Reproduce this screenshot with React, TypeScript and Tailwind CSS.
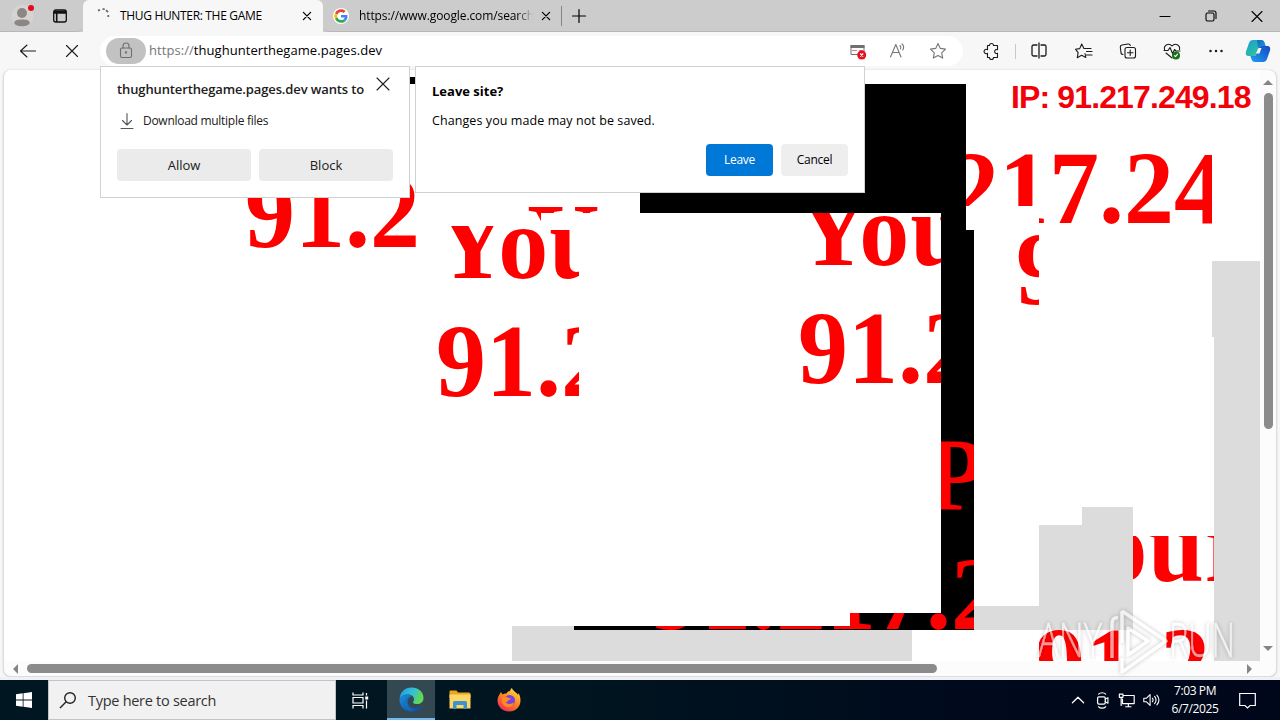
import type { ReactNode } from "react";

function Shard({ box, text, at }: { box: string; text?: string; at?: string }) {
  return (
    <div className={`absolute overflow-hidden ${box}`}>
      {text && (
        <span
          className={`absolute mt-[5px] scale-y-[1.03] whitespace-pre font-bold text-[100px] leading-[100px] text-[#ff0000] [font-family:'Liberation_Serif',serif] ${at}`}
        >
          {text}
        </span>
      )}
    </div>
  );
}

function Icon({ children, className = "", size = 20 }: { children: ReactNode; className?: string; size?: number }) {
  return (
    <svg
      viewBox="0 0 20 20"
      width={size}
      height={size}
      fill="none"
      stroke="currentColor"
      strokeWidth="1.1"
      strokeLinecap="round"
      strokeLinejoin="round"
      className={`shrink-0 ${className}`}
    >
      {children}
    </svg>
  );
}

function TabBar() {
  return (
    <div className="flex h-8 shrink-0 bg-[#cccccc] text-[12px] text-black">
      <div className="flex w-[83px] items-center rounded-br-md border-b border-[#b8b8b8]">
        <svg width="24" height="24" viewBox="0 0 24 24" className="ml-[11px] shrink-0">
          <circle cx="11.5" cy="12" r="11" fill="#d6d3d1" />
          <circle cx="11" cy="9" r="5" fill="#8c8785" />
          <path d="M3.3 19c0-3 3-3.600 7.700-3.600s7.700.6 7.700 3.600c0 1.500-3.600 3.300-7.700 3.300S3.300 20.500 3.300 19z" fill="#8c8785" />
          <circle cx="20" cy="4" r="3" fill="#e00b1c" />
        </svg>
        <svg width="16" height="16" viewBox="0 0 16 16" className="ml-[17px] shrink-0" fill="none" stroke="#111" strokeWidth="1.300">
          <rect x="1.700" y="2" width="12.600" height="12" rx="2" />
          <path d="M2 3.500h12M2 5h12M4.700 5v9" strokeWidth="1.600" />
        </svg>
      </div>
      <div className="flex w-[240px] items-center rounded-t-md bg-[#f7f7f7]">
        <svg width="16" height="16" viewBox="0 0 16 16" className="ml-[13px] shrink-0" fill="none" stroke="#6b6b6b" strokeWidth="1.800">
          <path d="M2 2.600l2-.8M6.500 1.200h2.200M10 2.200l2 2M12.300 7v2" />
        </svg>
        <span className="ml-2 w-[174px] whitespace-nowrap tracking-[-0.33px] [font-family:'Open_Sans',sans-serif]">THUG HUNTER: THE GAME</span>
        <Icon size={16} className="ml-[5px]"><path d="M5.500 5.500l9 9M14.500 5.500l-9 9" strokeWidth="1.600" /></Icon>
      </div>
      <div className="flex w-[239px] items-center rounded-bl-md border-b border-[#b8b8b8]">
        <svg width="16" height="16" viewBox="0 0 48 48" className="ml-[10px] shrink-0">
          <circle cx="24" cy="24" r="24" fill="#fff" />
          <g transform="translate(4 4) scale(.84)">
            <path fill="#ea4335" d="M24 9.500c3.500 0 6.700 1.200 9.200 3.600l6.900-6.900C35.900 2.400 30.500 0 24 0 14.600 0 6.500 5.400 2.600 13.200l8 6.200C12.400 13.700 17.700 9.500 24 9.500z" />
            <path fill="#4285f4" d="M47 24.600c0-1.600-.2-3.100-.4-4.600H24v9h12.900c-.6 3-2.200 5.500-4.700 7.200l7.700 6C44.400 38 47 32 47 24.600z" />
            <path fill="#fbbc05" d="M10.500 28.600c-.5-1.500-.8-3-.8-4.600s.3-3.100.8-4.600l-8-6.200C.9 16.500 0 20.100 0 24s.9 7.500 2.600 10.800z" />
            <path fill="#34a853" d="M24 48c6.500 0 11.900-2.100 15.900-5.800l-7.700-6c-2.200 1.500-4.900 2.300-8.200 2.300-6.300 0-11.600-4.200-13.500-9.900l-8 6.200C6.500 42.600 14.600 48 24 48z" />
          </g>
        </svg>
        <span className="ml-[10px] w-[174px] overflow-hidden whitespace-nowrap tracking-[-0.1px] [font-family:'Open_Sans',sans-serif] [mask-image:linear-gradient(to_right,#000_158px,transparent_174px)]">https://www.google.com/search</span>
        <Icon size={16} className="ml-[5px]"><path d="M5.500 5.500l9 9M14.500 5.500l-9 9" strokeWidth="1.600" /></Icon>
        <div className="ml-auto h-5 w-px bg-[#858585]" />
      </div>
      <div className="flex flex-1 items-center border-b border-[#b8b8b8]">
        <Icon size={20} className="ml-[7px]"><path d="M10 3.500v13M3.500 10h13" strokeWidth="1.200" /></Icon>
        <div className="ml-auto flex items-center gap-[26px] pr-[13px]">
          <Icon><path d="M5 10.500h10" /></Icon>
          <Icon><rect x="5" y="7" width="8" height="8" rx="1.500" /><path d="M7.500 5h5.500a2 2 0 0 1 2 2v5.500" /></Icon>
          <Icon><path d="M5 5.500l10 10M15 5.500l-10 10" /></Icon>
        </div>
      </div>
    </div>
  );
}

function Toolbar() {
  return (
    <div className="flex h-[38px] shrink-0 items-center text-[#1b1b1b]">
      <Icon className="ml-[18px]"><path d="M2.500 10h15M9 4L2.500 10 9 16" /></Icon>
      <Icon className="ml-6"><path d="M4.500 4.500l11 11M15.500 4.500l-11 11" /></Icon>
      <div className="ml-[18px] flex h-[30px] w-[863px] items-center rounded-full bg-white text-[#767676]">
        <div className="ml-[6px] flex h-[26px] w-10 items-center justify-center rounded-full bg-[#c2c2c2]">
          <Icon size={20} className="text-[#6e6e6e]"><rect x="4.500" y="7" width="11" height="9.500" rx="1.500" /><path d="M7 7V5a3 3 0 0 1 6 0v2" /><circle cx="10" cy="11.500" r=".6" fill="currentColor" /></Icon>
        </div>
        <span className="ml-[3px] text-[13px] tracking-[0.06px] [font-family:'Open_Sans',sans-serif]">
          https://<span className="text-black">thughunterthegame.pages.dev</span>
        </span>
        <div className="ml-auto flex items-center gap-5 pr-[15px]">
          <svg width="20" height="20" viewBox="0 0 20 20">
            <path d="M3 4.500h13v9H3z" fill="none" stroke="#707070" />
            <path d="M2.500 4h14v3h-14z" fill="#707070" />
            <path d="M4 9.500h5M11 9.500h4" stroke="#d08080" />
            <circle cx="13.700" cy="14" r="4.500" fill="#e8101c" />
            <path d="M12.200 12.500l3 3M15.200 12.500l-3 3" stroke="#fff" strokeWidth="1.200" />
          </svg>
          <Icon><path d="M2.500 16L7.800 3.500 13 16M4.500 11.500h6.500M12 4.500c1 1 1 2.500.4 3.500M14 2.800c2 2 1.800 4.500.7 6.200" /></Icon>
          <Icon><path d="M10 2.500l2.300 4.900 5.200.7-3.800 3.700 1 5.300L10 14.500l-4.700 2.600 1-5.300L2.500 8.100l5.200-.7z" /></Icon>
        </div>
      </div>
      <div className="ml-[18px] flex items-center">
        <Icon><path d="M6.500 4.500h2a2 2 0 0 1 4 0h4v4.200a2 2 0 1 0 0 3.600v4.200h-4a2 2 0 0 1-4 0h-2v-4.200a2.200 2.200 0 1 1 0-3.600z" /></Icon>
        <div className="ml-[14px] h-[15px] w-px bg-[#c8c8c8]" />
        <Icon className="ml-[13px]"><path d="M8 4H4.500A1.500 1.500 0 0 0 3 5.500v8A1.500 1.500 0 0 0 4.500 15H8M12 4h3.500A1.500 1.500 0 0 1 17 5.500v8a1.500 1.500 0 0 1-1.500 1.500H12M10 2v15" strokeWidth="1.300" /></Icon>
        <Icon className="ml-[25px]"><path d="M11 12.500l.8 4-4.200-2.200-4.300 2.400.8-5L1.500 8.200l4.200-.6L7.700 3l2.200 4.500h7.100M12.500 10.500H18M12.500 14H18" /></Icon>
        <Icon className="ml-6"><path d="M5 13.500A2 2 0 0 1 3 12L2.300 6A2 2 0 0 1 4 4l6-1a2 2 0 0 1 2.300 1.500" /><rect x="7" y="6.500" width="10.500" height="10.500" rx="2" /><path d="M12.200 9v5.500M9.500 11.700H15" /></Icon>
        <Icon className="ml-6"><path d="M2.500 8.500C1.500 4 7 1.500 10 5c3-3.500 8.500-1 7.500 3.500M4 12l6 5M2 9.500h4l2-3 2.500 6 2-4 1.500 1.500h4" /><circle cx="14" cy="14.500" r="4" fill="#16701a" stroke="none" /><path d="M12.500 14.700l1 1 2-2.500" stroke="#fff" /></Icon>
        <Icon className="ml-6"><circle cx="4.500" cy="10" r=".7" fill="#111" /><circle cx="10" cy="10" r=".7" fill="#111" /><circle cx="15.500" cy="10" r=".7" fill="#111" /></Icon>
        <svg className="ml-[19px] shrink-0" width="26" height="26" viewBox="0 0 26 26">
          <defs>
            <linearGradient id="cpA" x1="0" y1="0" x2="1" y2="1"><stop stopColor="#189bd8" /><stop offset="1" stopColor="#37d184" /></linearGradient>
            <linearGradient id="cpB" x1="0" y1="0" x2="1" y2="1"><stop stopColor="#1268b8" /><stop offset="1" stopColor="#1d9be8" /></linearGradient>
            <linearGradient id="cpC" x1="0" y1="1" x2="1" y2="0"><stop stopColor="#1fa0f0" /><stop offset="1" stopColor="#1746c8" /></linearGradient>
          </defs>
          <path d="M8 2h8c2 0 3 1 3.600 3l1 3h-4c-2.300 0-3 1.300-3.600 3l-2 5c-.6 1.600-1.400 2-3 2H4c-3 0-3.600-2-3-4.500L4 5c.7-2 2-3 4-3z" fill="url(#cpA)" />
          <path d="M12 2h4c2 0 3 1 3.600 3l1 3h-4c-2.300 0-3 1.300-3.600 3z" fill="url(#cpB)" />
          <path d="M18 24h-8c-2 0-3-1-3.600-3l-1-3H8c2 0 2.600-.5 3.400-2.500l2.200-5.600C14.300 8.500 15 8 17 8h5c3 0 3.600 2 3 4.500L22 21c-.7 2-2 3-4 3z" fill="url(#cpC)" />
          <path d="M11 15.500h3.500L16.500 10h-3z" fill="#f7f7f7" />
        </svg>
      </div>
    </div>
  );
}

function Canvas() {
  return (
    <div className="relative h-[591px] w-[1256px] overflow-hidden bg-white">
      <Shard box="left-[508px] top-[556px] h-[35px] w-[400px] bg-[#dcdcdc]" />
      <Shard box="left-[970px] top-[536px] h-[24px] w-[65px] bg-[#dcdcdc]" />
      <Shard box="left-[1035px] top-[455px] h-[105px] w-[43px] bg-[#dcdcdc]" />
      <Shard box="left-[1078px] top-[437px] h-[123px] w-[51px] bg-[#dcdcdc]" />
      <Shard box="left-[1208px] top-[191px] h-[76px] w-[48px] bg-[#dcdcdc]" />
      <Shard box="left-[1210px] top-[267px] h-[324px] w-[46px] bg-[#dcdcdc]" />

      <Shard box="left-[400px] top-[7px] h-[7px] w-[40px] bg-black" />
      <Shard box="left-[636px] top-[14px] h-[129px] w-[326px] bg-black" />
      <Shard box="left-[937px] top-[143px] h-[17px] w-[25px] bg-black" />
      <Shard box="left-[937px] top-[160px] h-[320px] w-[33px] bg-black" text="IP" at="left-[-55px] top-[191px]" />
      <Shard box="left-[846px] top-[543px] h-[17px] w-[124px] bg-black" text="91.217.2" at="left-[-199px] top-[-73px]" />
      <Shard box="left-[937px] top-[480px] h-[80px] w-[33px] bg-black" text="91.217.2" at="left-[-290px] top-[-10px]" />
      <Shard box="left-[570px] top-[556px] h-[4px] w-[276px] bg-black" text="91.217.2" at="left-[77px] top-[-86px]" />

      <Shard box="left-[236px] top-[100px] h-[90px] w-[176px]" text="91.2" at="left-[5px] top-[-12px]" />
      <Shard box="left-[430px] top-[156px] h-[60px] w-[145px]" text="You" at="left-[2px] top-[-37px] tracking-[1px]" />
      <Shard box="left-[430px] top-[250px] h-[90px] w-[145px]" text="91.2" at="left-[2px] top-[-13px]" />
      <Shard box="left-[520px] top-[130px] h-[23px] w-[17px]" text="Y" at="left-[3px] top-[-14px]" />
      <Shard box="left-[537px] top-[130px] h-[13px] w-[70px]" text="Y" at="left-[-14px] top-[-14px]" />
      <Shard box="left-[780px] top-[143px] h-[60px] w-[157px]" text="You" at="left-[13px] top-[-37px] tracking-[1px]" />
      <Shard box="left-[780px] top-[235px] h-[90px] w-[157px]" text="91.2" at="left-[14px] top-[-11px]" />
      <Shard box="left-[962px] top-[76px] h-[60px] w-[69px]" text="91.217.24" at="left-[-142px] top-[-12px]" />
      <Shard box="left-[1035px] top-[76px] h-[90px] w-[173px]" text="91.217.24" at="left-[-215px] top-[-12px]" />
      <Shard box="left-[1005px] top-[160px] h-[80px] w-[30px]" text="9" at="left-[7px] top-[-15px]" />
      <Shard box="left-[1129px] top-[466px] h-[60px] w-[81px]" text="Your" at="left-[-98px] top-[-44px] tracking-[1px]" />
      <Shard box="left-[1035px] top-[560px] h-[31px] w-[175px]" text="91.2" at="left-[-4px] top-[-20px]" />

      <span className="absolute left-[1007px] top-[9px] whitespace-nowrap text-[32px] font-bold leading-[36px] tracking-[-0.87px] text-[#f30008] [font-family:'Liberation_Sans',sans-serif]">
        IP: 91.217.249.18
      </span>
    </div>
  );
}

function Arrow({ d, className = "" }: { d: string; className?: string }) {
  return (
    <svg width="10" height="10" viewBox="0 0 10 10" className={`shrink-0 ${className}`}>
      <path d={d} fill="#858585" />
    </svg>
  );
}

function Viewport() {
  return (
    <div className="mx-[3px] h-[607px] shrink-0 overflow-hidden rounded-lg border border-t-0 border-[#dddddd] bg-[#fcfcfc] shadow-[0_0_2px_#ccc]">
      <div className="flex h-[591px]">
        <Canvas />
        <div className="flex flex-1 flex-col items-center pt-[7px]">
          <Arrow d="M0 8h10L5 3z" />
          <div className="mt-[6px] h-[336px] w-[9px] rounded-full bg-[#8b8b8b]" />
          <Arrow d="M0 3h10L5 8z" className="mt-auto mb-[8px]" />
        </div>
      </div>
      <div className="flex h-[15px] items-center pl-[7px]">
        <Arrow d="M7 0v10L2 5z" />
        <div className="ml-[6px] h-[9px] w-[910px] rounded-full bg-[#8b8b8b]" />
        <Arrow d="M3 0v10l5-5z" className="ml-[307px]" />
      </div>
    </div>
  );
}

function PermissionPopup() {
  return (
    <div className="absolute left-[100px] top-[66px] h-[132px] w-[310px] border border-[#cfd2d4] bg-white px-4 text-[#202020] [font-family:'Open_Sans',sans-serif]">
      <div className="flex h-[42px] items-center justify-between">
        <span className="mt-[3px] whitespace-nowrap text-[13px] font-semibold tracking-[-0.12px]">thughunterthegame.pages.dev wants to</span>
        <Icon className="-mt-[8px]"><path d="M4 4l12 12M16 4L4 16" /></Icon>
      </div>
      <div className="flex h-6 items-center">
        <Icon className="text-[#555]"><path d="M10 2.500v11M5.500 9.500L10 14l4.500-4.500M4 17.500h12" /></Icon>
        <span className="ml-[6px] whitespace-nowrap text-[12px] tracking-[-0.28px]">Download multiple files</span>
      </div>
      <div className="mt-4 flex gap-2 text-[13px]">
        <button className="h-8 w-[134px] rounded-sm bg-[#ebebeb] pt-px">Allow</button>
        <button className="h-8 w-[134px] rounded-sm bg-[#ebebeb] pt-px">Block</button>
      </div>
    </div>
  );
}

function LeaveDialog() {
  return (
    <div className="absolute left-[415px] top-[66px] h-[127px] w-[450px] border border-[#cfd2d4] bg-white px-4 text-black [font-family:'Open_Sans',sans-serif]">
      <div className="mt-[15px] text-[13px] font-bold leading-[18px]">Leave site?</div>
      <div className="mt-3 text-[12.500px] leading-[18px] tracking-[0.08px]">Changes you made may not be saved.</div>
      <div className="mt-[14px] flex justify-end gap-2 text-[12px]">
        <button className="h-8 w-[67px] rounded bg-[#0078d7] tracking-[-0.3px] text-white">Leave</button>
        <button className="h-8 w-[67px] rounded bg-[#eeeeee] tracking-[-0.3px]">Cancel</button>
      </div>
    </div>
  );
}

function Watermark() {
  return (
    <svg className="absolute left-[1030px] top-[600px] drop-shadow-[0_0_2px_rgba(0,0,0,0.4)]" width="215" height="80" viewBox="0 0 215 80" opacity="0.6">
      <g fill="#fff" stroke="#fff" strokeWidth="0.6" fontFamily="'Open Sans', sans-serif" fontSize="48" fontWeight="300">
        <text x="8" y="57" textLength="64" lengthAdjust="spacingAndGlyphs">ANY</text>
        <text x="139" y="57" textLength="66" lengthAdjust="spacingAndGlyphs">RUN</text>
      </g>
      <path d="M82 58V24q0-7 6-6M92 11l44 30-44 31V58M92 11v32M98 28l20 13-20 14z" fill="none" stroke="#fff" strokeWidth="3.500" strokeLinejoin="round" />
    </svg>
  );
}

function Taskbar() {
  return (
    <div className="flex h-10 shrink-0 items-center bg-[linear-gradient(90deg,#001722_0%,#001520_45%,#000a1c_75%,#00071a_100%)] text-white [font-family:'Open_Sans',sans-serif]">
      <div className="flex w-12 justify-center">
        <svg width="16" height="16" viewBox="0 0 16 16" fill="#fff"><path d="M0 2.200L6.700 1.300v6.300H0zM7.500 1.200L16 0v7.600H7.500zM0 8.400h6.700v6.300L0 13.800zM7.500 8.400H16V16l-8.500-1.200z" /></svg>
      </div>
      <div className="flex h-10 w-72 items-center border border-[#c4c4c4] bg-[#f1f1f1] text-[#333]">
        <svg width="18" height="18" viewBox="0 0 18 18" className="ml-[10px]" fill="none" stroke="#222" strokeWidth="1.400"><circle cx="11" cy="7" r="5.300" /><path d="M7.200 10.800L1 17" /></svg>
        <span className="ml-[11px] whitespace-nowrap pt-px text-[14.500px] tracking-[-0.28px]">Type here to search</span>
      </div>
      <div className="flex w-[49px] justify-center">
        <svg width="17" height="17" viewBox="0 0 17 17" fill="none" stroke="#fff" strokeWidth="1.200"><path d="M1 .5v2.500h10V.5M1 16.500v-3h10v3M1 5.500h10v5.500H1zM14.500 1v2.500M14.500 8.500v8" /><path d="M13.200 4.500h3v3h-3z" fill="#fff" stroke="none" /></svg>
      </div>
      <div className="ml-[2px] flex h-10 w-12 items-center justify-center border-b-2 border-[#76b9ed] bg-[#344852]">
        <svg width="25" height="25" viewBox="0 0 25 25">
          <defs>
            <linearGradient id="edT" x1="0" y1="0" x2="1" y2=".3"><stop stopColor="#1b9de2" /><stop offset=".6" stopColor="#35c1d4" /><stop offset="1" stopColor="#62d84e" /></linearGradient>
            <linearGradient id="edB" x1="0" y1="0" x2="1" y2="1"><stop stopColor="#1a8fe0" /><stop offset="1" stopColor="#0c4a94" /></linearGradient>
          </defs>
          <path d="M.6 12C1 5 6 .5 12.500.5 19.500.5 24.500 5 24.500 11c0 4-3 6-6.500 6-2.500 0-4-.8-4-1.800 0-.7 1-1.200 1-3 0-2.500-2.300-4.700-6-4.700C4.500 7.500 1.500 9.500.6 12z" fill="url(#edT)" />
          <path d="M.5 12.500C1.500 9 5 7.500 8.500 7.500c2 0 3.500.6 4.700 1.500C9.500 9.500 8 12.500 8.500 15.500c.7 4 4.500 6.500 9 5.500 2-.4 3.500-1.200 4.500-1.700.5-.2.900.2.600.7-2 3-5.500 4.700-9.500 4.700C6 24.700.3 19.500.5 12.500z" fill="url(#edB)" />
          <path d="M8.400 14c-1.400 5 1.600 9.500 6.600 10.500-5-.2-9-4-9-8.500 0-4.500 4-7 7.200-7-2.500.5-4.300 2.500-4.800 5z" fill="#1272c4" />
        </svg>
      </div>
      <div className="flex w-[49px] justify-center">
        <svg width="22" height="20" viewBox="0 0 22 20">
          <path d="M.5 1.500Q.5.500 1.500.5h6l1.500 2h11q1.500 0 1.500 1.500v4H.5z" fill="#e8a623" />
          <path d="M.5 4.500h21v14H.5z" fill="#ffd566" />
          <path d="M4 19v-6.500Q4 11 5.500 11h11q1.500 0 1.500 1.500V19h-3.500v-4h-7v4z" fill="#3d93cc" />
        </svg>
      </div>
      <div className="flex w-[49px] justify-center">
        <svg width="24" height="24" viewBox="0 0 24 24">
          <defs><linearGradient id="ff" x1=".8" y1="0" x2=".2" y2="1"><stop stopColor="#ffe14a" /><stop offset=".45" stopColor="#ff8a1e" /><stop offset="1" stopColor="#f0245c" /></linearGradient></defs>
          <path d="M4 4l1.500 2.500C7 5.500 8.500 5.300 9.500 5.500 10.500 3.500 12 3 13 3c.3-1.500 1-2.500 2-3 .5 3 5 4.500 6 7l.5-2c1.500 2.500 2 5 2 7.500 0 6.500-5 11-11.300 11S.5 19 .5 12.500C.5 9 2.300 6.500 4 4z" fill="url(#ff)" />
          <circle cx="12.500" cy="12.500" r="5.500" fill="#7542e5" />
          <path d="M5.500 9c2-1 4-.5 5.500.8l3 .4c-.3 1.300-2 1.500-2.500 2-.5 1.300-2 2-3 1.800 1.500 2.500 5.500 2.500 8.500.5-1 4-4.500 5.500-7.500 4.500-4-1.200-5.500-6-4-10z" fill="#ff8a25" />
        </svg>
      </div>
      <div className="ml-auto flex items-center">
        <Icon size={16}><path d="M3 13.500l7-7 7 7" strokeWidth="1.600" /></Icon>
        <Icon size={18} className="ml-2"><rect x="4" y="6.500" width="8.500" height="8" rx="1.500" strokeWidth="1.400" /><path d="M12.500 9l3-1.500v6l-3-1.500M5 3.500c2-2 6-2 8 0M5 17.500c2 2 6 2 8 0" strokeWidth="1.200" /></Icon>
        <Icon size={18} className="ml-[6px]"><path d="M6 5h12v9H5V9M11.500 14v3M8.500 17.500h6M1.500 3.500h4v3.500h-4zM3.500 7v9" strokeWidth="1.300" /></Icon>
        <Icon size={18} className="ml-[6px]"><path d="M2 8v4h3l4 4V4L5 8zM11.500 8c1 1.200 1 2.800 0 4M14 6c2 2.500 2 5.500 0 8M16.500 4.500c3 3.500 3 7.500 0 11" strokeWidth="1.200" /></Icon>
        <div className="ml-[10px] w-[50px] whitespace-nowrap text-center text-[12px] leading-[18px] tracking-[-0.4px]">
          <div>7:03 PM</div>
          <div>6/7/2025</div>
        </div>
        <svg width="17" height="17" viewBox="0 0 17 17" className="mr-6 ml-[19px]" fill="none" stroke="#fff" strokeWidth="1.200"><path d="M.7 1.500h15.600v12H11l-2.500 2.500L6 13.500H.7z" /></svg>
      </div>
    </div>
  );
}

export default function App() {
  return (
    <div className="relative flex h-[720px] w-[1280px] flex-col overflow-hidden bg-[#f7f7f7]">
      <TabBar />
      <Toolbar />
      <Viewport />
      <div className="h-[3px] shrink-0 bg-[#eef1f5]" />
      <Taskbar />
      <PermissionPopup />
      <LeaveDialog />
      <Watermark />
    </div>
  );
}
